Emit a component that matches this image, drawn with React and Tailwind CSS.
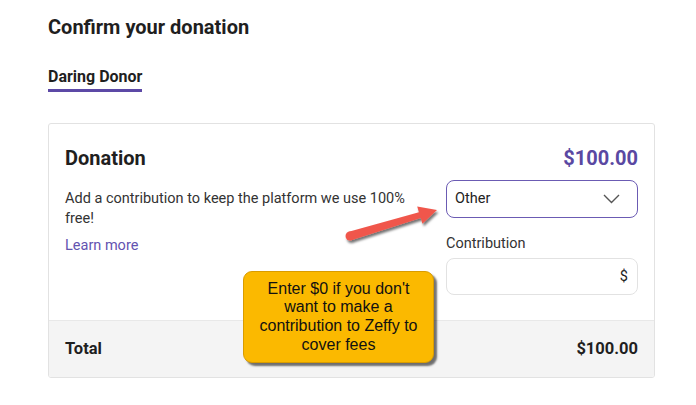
import React from "react";

export default function App() {
  return (
    <div className="relative w-[696px] h-[405px] bg-white overflow-hidden" style={{ fontFamily: "Roboto, 'Noto Sans', sans-serif" }}>
      <div className="pl-[48px] pt-[13px] w-[655px]">
        <h1 className="text-[20px] leading-[28px] font-bold text-[#1f1f1f]">Confirm your donation</h1>
        <div className="mt-[24px]">
          <div className="inline-block border-b-[3px] border-[#5c49a6] pb-[2px] text-[16px] leading-[20px] font-bold text-[#1f1f1f]">
            Daring Donor
          </div>
        </div>
        <div className="mt-[31px] border border-[#e2e2e2] rounded-[3px] overflow-hidden">
          <div className="px-4 pt-[21px] pb-[25px]">
            <div className="flex items-center justify-between h-[26px]">
              <span className="text-[20px] font-bold text-[#1f1f1f]">Donation</span>
              <span className="text-[20px] font-bold text-[#5a48a2]">$100.00</span>
            </div>
            <div className="mt-[9px] flex justify-between">
              <div className="w-[360px] pt-[9px]">
                <p className="text-[14.5px] leading-[20px] text-[#333]">
                  Add a contribution to keep the platform we use 100% free!
                </p>
                <div className="mt-[7px] text-[14.5px] leading-[20px] text-[#6353b0]">Learn more</div>
              </div>
              <div className="w-[192px]">
                <div className="h-[38px] border-[1.5px] border-[#6b5bb3] rounded-[8px] flex items-center justify-between pl-[8px] pr-[17px]">
                  <span className="text-[14.5px] text-[#222]">Other</span>
                  <svg width="17" height="10" viewBox="0 0 17 10">
                    <polyline points="1,1 8.5,8.5 16,1" fill="none" stroke="#555" strokeWidth="1.4" />
                  </svg>
                </div>
                <div className="mt-[16px] text-[14.5px] leading-[20px] text-[#333]">Contribution</div>
                <div className="mt-[4px] h-[37px] border border-[#e2e2e2] rounded-[8px] flex items-center justify-end pr-[9px]">
                  <span className="text-[14.5px] text-[#222]">$</span>
                </div>
              </div>
            </div>
          </div>
          <div className="h-[57px] bg-[#f4f4f4] border-t border-[#e8e8e8] flex items-center justify-between px-4">
            <span className="text-[16.5px] font-bold text-[#1f1f1f]">Total</span>
            <span className="text-[16.5px] font-bold text-[#1f1f1f]">$100.00</span>
          </div>
        </div>
      </div>

      <svg className="absolute left-0 top-0 pointer-events-none" width="696" height="405" viewBox="0 0 696 405">
        <defs>
          <filter id="sh" x="-20%" y="-50%" width="140%" height="200%">
            <feDropShadow dx="1.5" dy="2.5" stdDeviation="1.2" floodColor="#000" floodOpacity="0.55" />
          </filter>
        </defs>
        <g filter="url(#sh)" fill="#f0574c">
          <polygon points="348.7,231.7 418.9,212.2 417.2,206.5 437,210 422.4,223.7 420.7,218.0 351.3,240.3" />
          <circle cx="350" cy="236" r="4.5" />
        </g>
      </svg>

      <div
        className="absolute left-[243px] top-[271px] w-[191px] h-[92px] bg-[#fbb900] rounded-[9px] border border-[#d99c00] shadow-[3px_3px_2px_rgba(0,0,0,0.55)] flex items-center justify-center text-center text-[16px] leading-[18.7px] text-[#111]"
        style={{ fontFamily: "'Liberation Sans', Arial, sans-serif" }}
      >
        <span>
          Enter $0 if you don't
          <br />
          want to make a
          <br />
          contribution to Zeffy to
          <br />
          cover fees
        </span>
      </div>
    </div>
  );
}
